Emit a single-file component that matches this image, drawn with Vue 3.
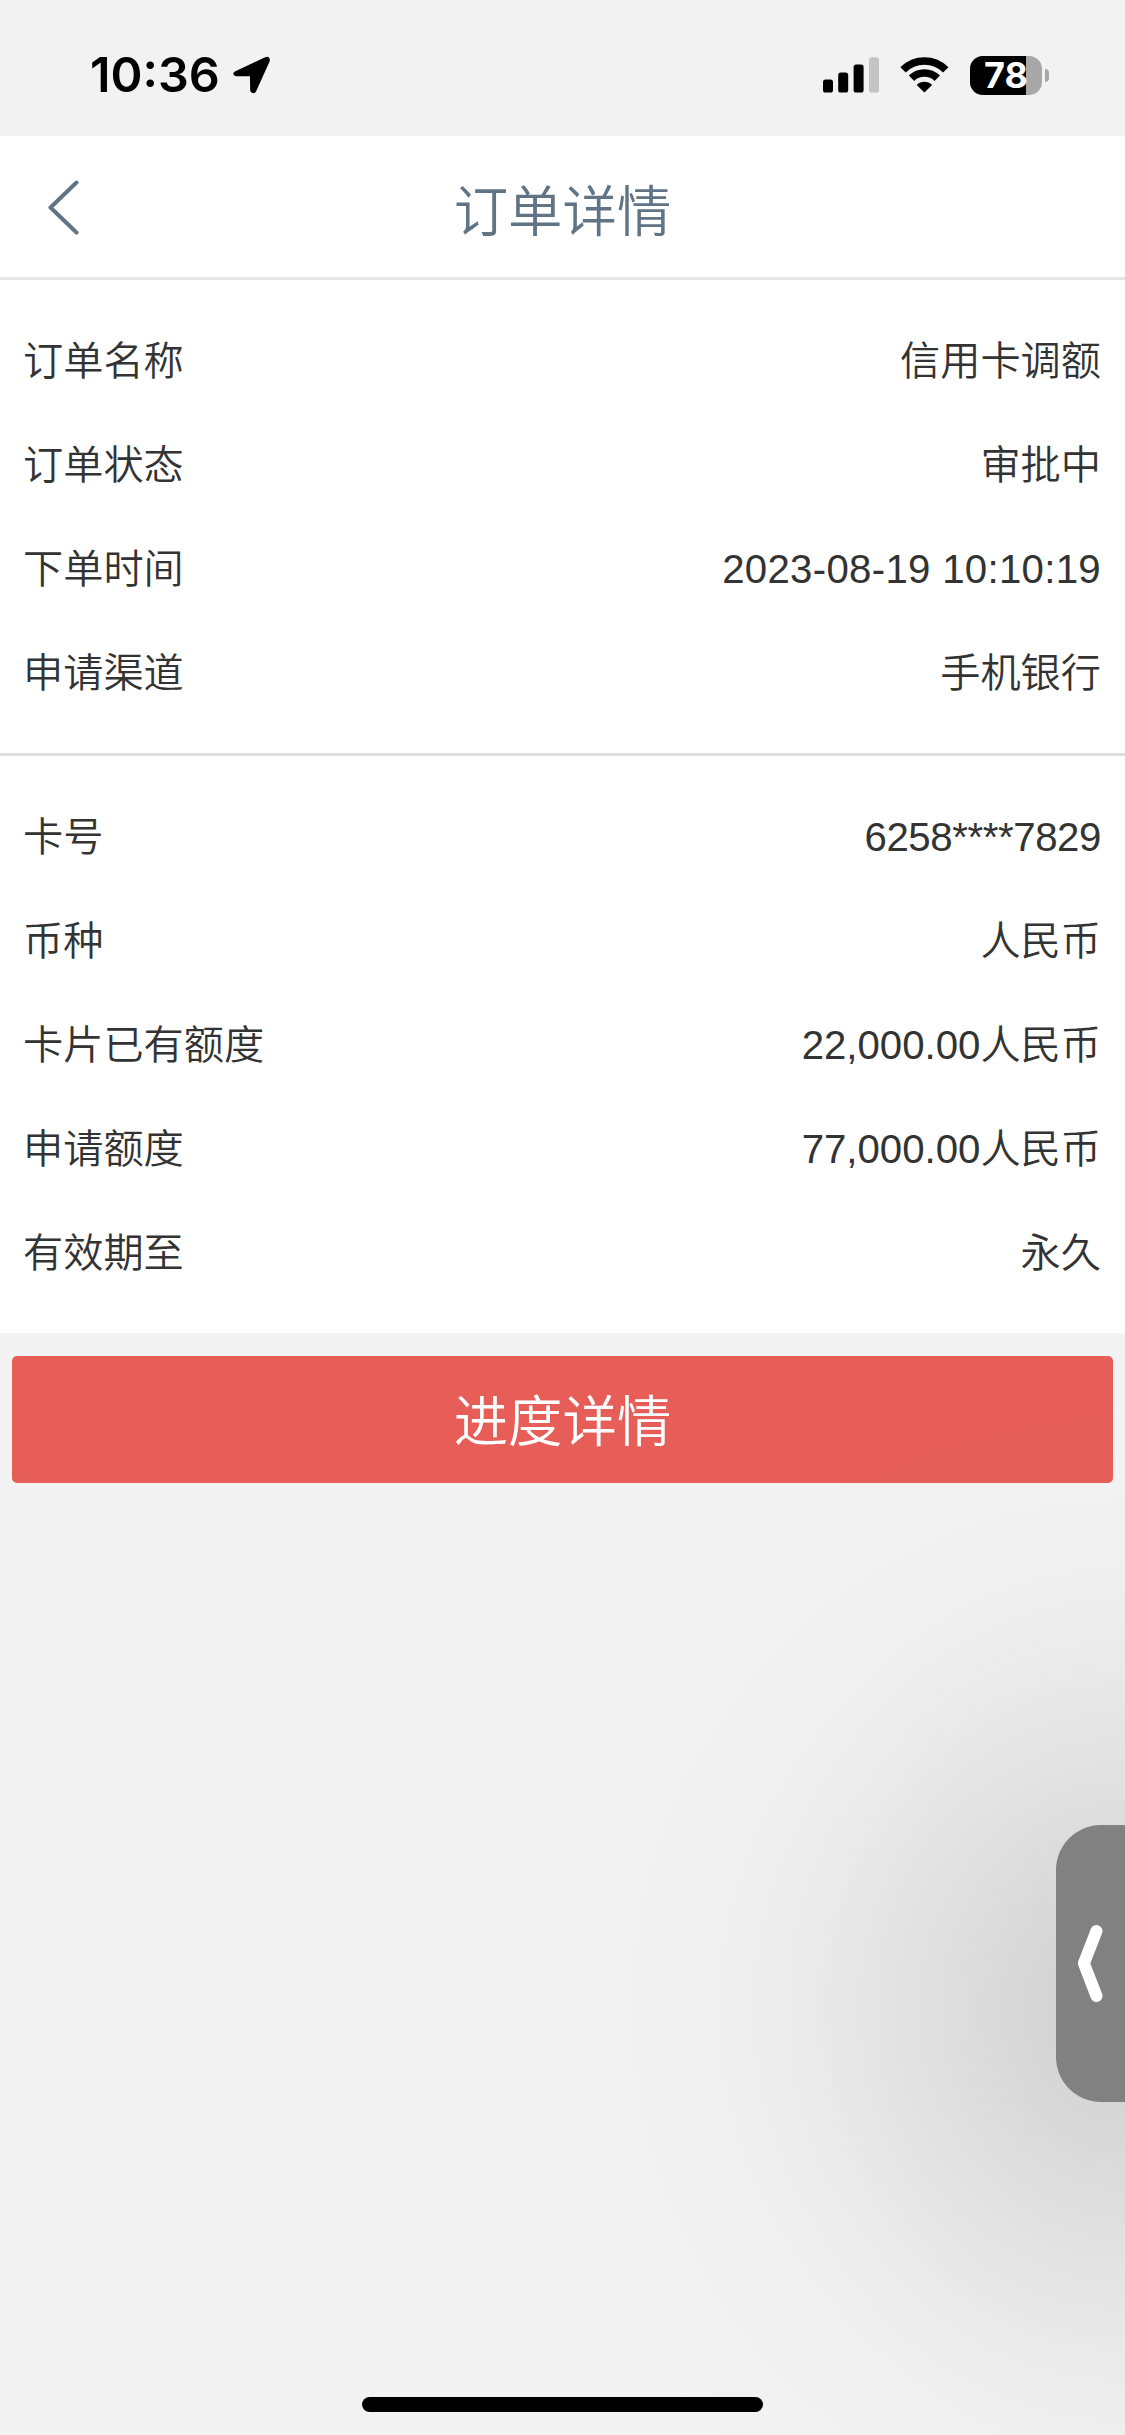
<script setup>
import { ref, computed } from 'vue'

const time = ref('10:36')
const battery = ref(78)

const orderInfo = [
  { label: '订单名称', value: '信用卡调额' },
  { label: '订单状态', value: '审批中' },
  { label: '下单时间', value: '2023-08-19 10:10:19', kind: 'date' },
  { label: '申请渠道', value: '手机银行' }
]

const cardInfo = [
  { label: '卡号', value: '6258****7829', kind: 'card-no' },
  { label: '币种', value: '人民币' },
  { label: '卡片已有额度', value: '22,000.00人民币' },
  { label: '申请额度', value: '77,000.00人民币' },
  { label: '有效期至', value: '永久' }
]

const sections = [orderInfo, cardInfo]

const batteryWidth = computed(() => `${battery.value}%`)
</script>

<template>
  <div class="page">
    <header class="status-bar">
      <div class="status-left">
        <span class="time">{{ time }}</span>
        <svg class="location" width="38" height="38" viewBox="0 0 38 38">
          <path
            d="M3 16.6 L32.8 2.6 Q36 1.6 35.2 5 L22 34.2 Q20.4 37 18.7 34.4 L18.4 18.8 L3.2 18.8 Q0.4 18.2 3 16.6 Z"
            stroke="#000"
            stroke-width="3"
            stroke-linejoin="round"
          />
        </svg>
      </div>
      <div class="status-right">
        <svg class="signal" width="56" height="36" viewBox="0 0 56 36">
          <rect x="0" y="22.5" width="10" height="13" rx="2.6" />
          <rect x="15.2" y="15.5" width="10" height="20" rx="2.6" />
          <rect x="30.6" y="7.5" width="10" height="28" rx="2.6" />
          <rect x="46" y="0.3" width="10" height="35.2" rx="2.6" fill="#c4c4c4" />
        </svg>
        <svg class="wifi" width="49" height="37" viewBox="0 0 49 37">
          <g fill="none" stroke="#000" stroke-width="7.6">
            <path d="M3.05 12.85 A30.2 30.2 0 0 1 45.75 12.85" />
            <path d="M11.5 21.3 A18.3 18.3 0 0 1 37.3 21.3" />
          </g>
          <path d="M24.4 35.6 L16.7 27.9 A11 11 0 0 1 32.1 27.9 Z" />
        </svg>
        <div class="battery">
          <div class="battery-body">
            <div class="battery-level" :style="{ width: batteryWidth }"></div>
            <span class="battery-text">{{ battery }}</span>
          </div>
          <div class="battery-tip"></div>
        </div>
      </div>
    </header>

    <nav class="nav-bar">
      <svg class="back" width="34" height="56" viewBox="0 0 34 56">
        <path
          d="M29.5 3.5 L3.5 28.5 L29.5 53.5"
          fill="none"
          stroke="#617486"
          stroke-width="4"
          stroke-linecap="round"
          stroke-linejoin="round"
        />
      </svg>
      <h1 class="title">订单详情</h1>
    </nav>

    <main class="content">
      <section v-for="(rows, i) in sections" :key="i" class="section">
        <div v-for="row in rows" :key="row.label" class="row">
          <span>{{ row.label }}</span>
          <span :class="row.kind">{{ row.value }}</span>
        </div>
      </section>
    </main>

    <button class="progress-btn">进度详情</button>

    <!-- Floating drawer handle and the glow behind it -->
    <div class="glow"></div>
    <div class="side-tab">
      <svg width="27" height="80" viewBox="0 0 27 80">
        <path
          d="M19.5 8 L6.9 40.3 L19.5 73"
          fill="none"
          stroke="#fff"
          stroke-width="12"
          stroke-linecap="round"
          stroke-linejoin="round"
        />
      </svg>
    </div>
    <div class="home-indicator"></div>
  </div>
</template>

<style>
body {
  margin: 0;
  background: #f3f3f3;
}
</style>

<style scoped>
.page {
  position: relative;
  display: flex;
  flex-direction: column;
  width: 1125px;
  height: 2435px;
  overflow: hidden;
  background: #f3f3f3;
  color: #333;
  font-family: "Liberation Sans", "Noto Sans CJK SC", sans-serif;
  font-weight: 350;
}

/* Status bar */
.status-bar {
  display: flex;
  justify-content: space-between;
  align-items: center;
  box-sizing: border-box;
  height: 136px;
  padding: 14px 76px 0 90px;
  background: #f2f2f2;
  color: #000;
  font-family: Inter, sans-serif;
}

.status-left,
.status-right,
.battery {
  display: flex;
  align-items: center;
}

.time {
  font-size: 48.5px;
  font-weight: 600;
  line-height: 60px;
}

.location {
  margin-left: 13px;
}

.wifi {
  margin-left: 21px;
}

.battery {
  margin-left: 21px;
  gap: 3px;
}

.battery-body {
  position: relative;
  display: flex;
  align-items: center;
  justify-content: center;
  width: 72px;
  height: 39px;
  border-radius: 13px;
  background: #a8a8a8;
}

.battery-level {
  position: absolute;
  left: 0;
  top: 0;
  height: 100%;
  border-radius: 13px 0 0 13px;
  background: #000;
}

.battery-text {
  position: relative;
  color: #fff;
  font-size: 36px;
  font-weight: 700;
  line-height: 44px;
}

.battery-tip {
  width: 4px;
  height: 13px;
  border-radius: 0 6px 6px 0;
  background: #a8a8a8;
}

/* Title bar */
.nav-bar {
  display: grid;
  grid-template-columns: 120px 1fr 120px;
  align-items: center;
  box-sizing: border-box;
  height: 144px;
  border-bottom: 3px solid #e5e5e5;
  background: #fff;
}

.back {
  margin-left: 47px;
}

.title {
  margin: 0;
  padding-top: 12px;
  color: #617486;
  font-size: 54.4px;
  font-weight: 350;
  line-height: 80px;
  text-align: center;
}

/* Detail rows */
.section {
  padding: 29.5px 24px 27.5px 23px;
  background: #fff;
}

.section + .section {
  border-top: 3px solid #ddd;
}

.row {
  display: flex;
  justify-content: space-between;
  align-items: center;
  height: 104px;
  font-size: 40.2px;
  line-height: 60px;
}

.date {
  letter-spacing: 0.3px;
}

.card-no {
  letter-spacing: -0.4px;
}

.progress-btn {
  height: 127px;
  margin: 23px 12px 0;
  padding: 0 0 4px;
  border: 0;
  border-radius: 5px;
  background: #e75e58;
  color: #fff;
  font-family: inherit;
  font-size: 54.4px;
  font-weight: 350;
}

.glow {
  position: absolute;
  right: 0;
  top: 1333px;
  width: 640px;
  height: 1102px;
  background:
    radial-gradient(ellipse 400px 460px at 100% 677px, rgba(0, 0, 0, 0.085), rgba(0, 0, 0, 0.052) 40%, rgba(0, 0, 0, 0.015) 75%, transparent),
    radial-gradient(ellipse 620px 640px at 100% 677px, rgba(0, 0, 0, 0.07), rgba(0, 0, 0, 0.033) 42%, rgba(0, 0, 0, 0.008) 75%, transparent);
  pointer-events: none;
}

.side-tab {
  position: absolute;
  right: 0;
  top: 1824.5px;
  display: flex;
  align-items: center;
  box-sizing: border-box;
  width: 69px;
  height: 277px;
  padding-left: 21px;
  border-radius: 45px 0 0 45px;
  background: #818181;
}

.home-indicator {
  position: absolute;
  left: 362px;
  bottom: 23px;
  width: 401px;
  height: 15px;
  border-radius: 8px;
  background: #000;
}
</style>
